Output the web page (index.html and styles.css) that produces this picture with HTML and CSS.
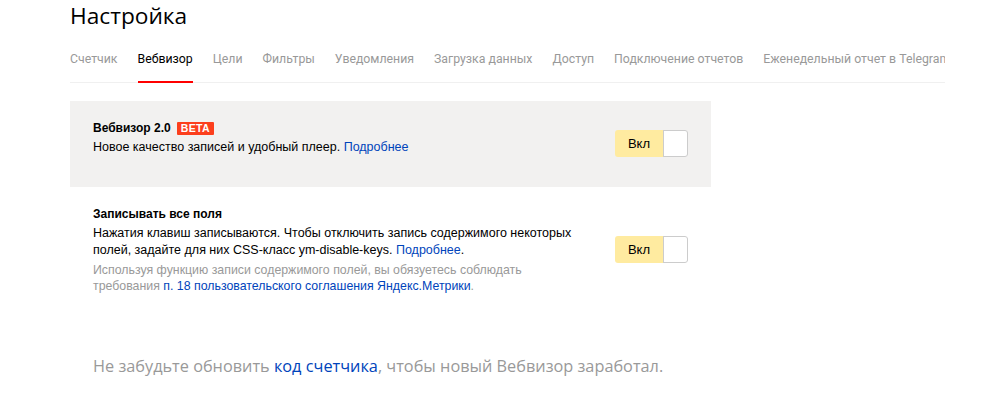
FILE: index.html
```html
<!DOCTYPE html>
<html lang="ru">
<head>
<meta charset="utf-8">
<title>Настройка</title>
<link rel="stylesheet" href="styles.css">
</head>
<body>
<div class="page">
  <h1 class="title">Настройка</h1>
  <nav class="tabs">
    <a class="tab">Счетчик</a>
    <a class="tab tab-active">Вебвизор</a>
    <a class="tab">Цели</a>
    <a class="tab">Фильтры</a>
    <a class="tab">Уведомления</a>
    <a class="tab">Загрузка данных</a>
    <a class="tab">Доступ</a>
    <a class="tab">Подключение отчетов</a>
    <a class="tab">Еженедельный отчет в Telegram</a>
  </nav>

  <section class="card card-gray">
    <div class="card-text">
      <div class="card-title">Вебвизор 2.0 <span class="badge">BETA</span></div>
      <div class="card-desc">Новое качество записей и удобный плеер. <a class="link">Подробнее</a></div>
    </div>
    <div class="toggle toggle-top"><span class="toggle-label">Вкл</span><span class="toggle-knob"></span></div>
  </section>

  <section class="card card-plain">
    <div class="card-text">
      <div class="card-title">Записывать все поля</div>
      <div class="card-desc">Нажатия клавиш записываются. Чтобы отключить запись содержимого некоторых полей, задайте для них CSS-класс ym-disable-keys. <a class="link">Подробнее</a>.</div>
      <div class="card-note">Используя функцию записи содержимого полей, вы обязуетесь соблюдать требования <a class="link">п. 18 пользовательского соглашения Яндекс.Метрики</a>.</div>
    </div>
    <div class="toggle"><span class="toggle-label">Вкл</span><span class="toggle-knob"></span></div>
  </section>

  <p class="reminder">Не забудьте обновить <a class="link-strong">код счетчика</a>, чтобы новый Вебвизор заработал.</p>
</div>
</body>
</html>
```

FILE: styles.css
```css
html, body {
  margin: 0;
  padding: 0;
  background: #fff;
}

body {
  font-family: "Liberation Sans", Arial, sans-serif;
  color: #000;
  overflow: hidden;
}

.page {
  padding-left: 70px;
  width: 930px;
}

.title {
  margin: 0;
  padding-top: 1px;
  font-family: "Open Sans", sans-serif;
  font-weight: 400;
  font-size: 22.7px;
  line-height: 30px;
  color: #000;
}

.tabs {
  display: flex;
  gap: 20px;
  margin-top: 19px;
  width: 875px;
  border-bottom: 1px solid #f0f0f0;
  white-space: nowrap;
  overflow-x: clip;
}

.tab {
  font-family: Roboto, sans-serif;
  font-size: 12.3px;
  line-height: 18px;
  color: #999;
  padding: 0 0 13px;
  border-bottom: 2px solid transparent;
  margin-bottom: -1px;
}

.tab-active {
  color: #000;
  border-bottom-color: #ff0000;
}

.card {
  display: flex;
  justify-content: space-between;
  box-sizing: border-box;
  width: 641px;
  padding: 0 23px;
}

.card-gray {
  margin-top: 18px;
  height: 86px;
  padding-top: 17px;
  align-items: flex-start;
  background: #f2f1f0;
}

.toggle-top {
  margin-top: 12px;
}

.card-plain {
  margin-top: 17px;
  align-items: center;
}

.card-text {
  width: 485px;
}

.card-title {
  font-size: 12px;
  font-weight: 700;
  line-height: 20px;
  display: flex;
  align-items: center;
  gap: 6px;
}

.badge {
  display: inline-block;
  background: #fc3f1d;
  color: #fff;
  font-size: 10.5px;
  font-weight: 700;
  line-height: 13px;
  padding: 0 4px;
  letter-spacing: 0.4px;
  border-radius: 1px;
}

.card-desc {
  font-size: 12.5px;
  line-height: 17px;
  margin-top: 1px;
}

.card-note {
  font-size: 12.35px;
  line-height: 16px;
  color: #999;
  margin-top: 3px;
}

.link {
  color: #04b;
  text-decoration: none;
}

.toggle {
  display: flex;
  height: 27px;
  width: 73px;
  border-radius: 3px;
  overflow: hidden;
  flex-shrink: 0;
}

.toggle-label {
  width: 48px;
  background: #ffeba0;
  font-size: 13px;
  line-height: 27px;
  text-align: center;
  color: #000;
}

.toggle-knob {
  flex: 1;
  background: #fff;
  border: 1px solid rgba(0, 0, 0, 0.2);
  border-radius: 0 3px 3px 0;
}

.reminder {
  margin: 61px 0 0 23px;
  font-family: "Open Sans", sans-serif;
  font-size: 16.3px;
  line-height: 22px;
  color: #999;
}

.link-strong {
  color: #04b;
  text-decoration: none;
}
```
